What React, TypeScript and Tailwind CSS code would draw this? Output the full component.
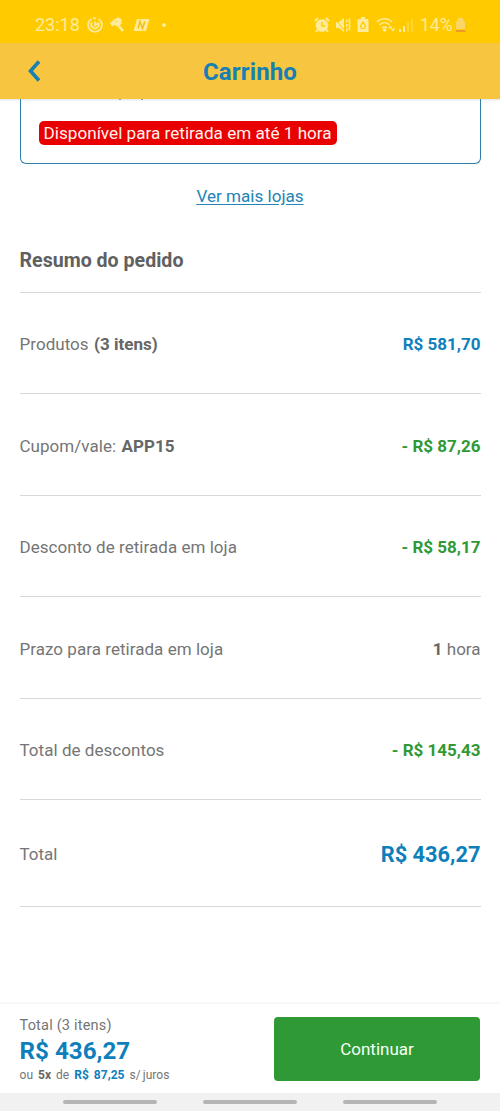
import React from "react";

type SummaryRow = {
  label: string;
  strong?: string;
  value: React.ReactNode;
  color: string;
};

const rows: SummaryRow[] = [
  {
    label: "Produtos",
    strong: "(3 itens)",
    value: "R$ 581,70",
    color: "text-[#0f7fbc] font-bold",
  },
  {
    label: "Cupom/vale:",
    strong: "APP15",
    value: "- R$ 87,26",
    color: "text-[#2f9a35] font-bold",
  },
  {
    label: "Desconto de retirada em loja",
    value: "- R$ 58,17",
    color: "text-[#2f9a35] font-bold",
  },
  {
    label: "Prazo para retirada em loja",
    value: (
      <>
        <b className="text-[#666]">1</b> hora
      </>
    ),
    color: "text-[#757575]",
  },
  {
    label: "Total de descontos",
    value: "- R$ 145,43",
    color: "text-[#2f9a35] font-bold",
  },
];

const StatusBar = () => (
  <div className="flex h-[43px] shrink-0 items-center bg-[#ffcb00] pt-[7px] pl-[35px] text-[#ffeb9a]">
    <span className="w-[46px] text-[18px] leading-5">23:18</span>
    <svg className="ml-[6px]" width="16" height="16" viewBox="0 0 16 16" fill="none" stroke="currentColor" strokeWidth="1.7">
      <path d="M4.5 2A6.9 6.9 0 1 0 11.5 2M6 1.4a6 6 0 0 1 3 0" />
      <path d="M5 5.5a3.7 3.7 0 1 0 6 0M8 4.5v4l2.5-2" />
    </svg>
    <svg className="ml-[6px]" width="16" height="16" viewBox="0 0 16 16" fill="currentColor">
      <path d="M1 6 5 2.5 9 .5l3.500 1.500V7L9 9.500 5.500 8 3 9.500z" />
      <path d="m9 8 5 6" stroke="currentColor" strokeWidth="2.4" />
      <circle cx="7" cy="4.5" r=".8" fill="#ffcb00" />
    </svg>
    <svg className="ml-[8px]" width="17" height="14" viewBox="0 0 17 14">
      <path d="M4 1h12.5L13 13H.5z" fill="currentColor" />
      <path d="m5 10.5 2-7 2.5 7 2.3-7" fill="none" stroke="#f3bd16" strokeWidth="1.5" />
    </svg>
    <span className="ml-[12px] size-1 rounded-full bg-current" />
    <svg className="ml-[148px]" width="16" height="16" viewBox="0 0 16 16" fill="currentColor">
      <circle cx="8" cy="8.5" r="6.3" />
      <path d="m1 4 3-3m11 3-3-3M3.5 13 2 15m10.5-2 1.5 2" stroke="currentColor" strokeWidth="2" />
      <path d="M8 5v4h3" fill="none" stroke="#ffcb00" strokeWidth="1.4" />
    </svg>
    <svg className="ml-[5px]" width="16" height="16" viewBox="0 0 16 16" fill="currentColor">
      <path d="M1 5h3l5-4v14l-5-4H1z" />
      <path d="m0 2 10 12" stroke="#ffcb00" strokeWidth="1" />
      <path d="M11.8 2.5v3m0 1.5v3m0 1.5v3M15 1.5l-1 2 1 2-1 2 1 2-1 2 1 2" fill="none" stroke="currentColor" strokeWidth="1.4" />
    </svg>
    <svg className="ml-[6px]" width="12" height="16" viewBox="0 0 12 16" fill="currentColor">
      <path d="M4 0h4v2h2.5l1 1v12H.5V3l1-1H4z" />
      <path d="m6 5 2.5 4-1 2.500h-3L3.500 9z" fill="none" stroke="#ffcb00" strokeWidth="1.2" />
    </svg>
    <svg className="ml-[7px]" width="19" height="16" viewBox="0 0 19 16" fill="none" stroke="currentColor" strokeWidth="1.5">
      <path d="M1 5c4-4.5 11-4.5 15 0M3.5 8c3-3 7-3 10 0M6 11c1.5-1.5 3.5-1.5 5 0" />
      <circle cx="8.5" cy="13" r="1" fill="currentColor" />
      <path d="m13 11.500 1.500-2 1.500 2m-.5 0 1.500 2 1.500-2" strokeWidth="1.3" />
    </svg>
    <svg className="ml-[4px]" width="14" height="15" viewBox="0 0 14 15" fill="currentColor">
      <path d="M0 11h2v3H0zM4 8h2v6H4z" />
      <path d="M8 4h2v10H8zM12 1h2v13h-2z" opacity=".35" />
    </svg>
    <span className="ml-[7px] w-[33px] text-[17.5px] leading-5 whitespace-nowrap">14%</span>
    <svg className="ml-[2px]" width="11" height="15" viewBox="0 0 11 15">
      <path d="M3 0h5v2l2 2v7H1V4l2-2z" fill="#fbd667" />
      <path d="M1 12h9.5v2H1z" fill="#ed9a2d" />
    </svg>
  </div>
);

const Header = () => (
  <header className="relative flex h-14 shrink-0 items-center justify-center bg-[#f7c540] pt-[2px] shadow-[0_1px_2px_rgba(0,0,0,0.12)]">
    <button className="absolute top-[17px] left-[28px]" aria-label="Voltar">
      <svg width="13" height="22" viewBox="0 0 13 22" fill="none" stroke="#1680b3" strokeWidth="3.6">
        <path d="M11 1.5 2.5 11l8.5 9.5" />
      </svg>
    </button>
    <h1 className="text-[24px] font-bold tracking-[0.15px] text-[#1680b3]">Carrinho</h1>
  </header>
);

const Row = ({ label, strong, value, color }: SummaryRow) => (
  <div className="flex h-[101.4px] items-center justify-between border-b-[1.5px] border-[#d8d8d8] pt-[4px] text-[17px] text-[#757575]">
    <span className="tracking-[0.04px]">
      {label} {strong && <b className="ml-px text-[#666]">{strong}</b>}
    </span>
    <span className={color}>{value}</span>
  </div>
);

const Footer = () => (
  <footer className="flex h-[89px] shrink-0 justify-between pt-[13px] pr-5 pl-[19.5px] shadow-[0_-1px_3px_rgba(0,0,0,0.06)]">
    <div className="text-[#757575]">
      <p className="pt-px text-[14.5px] leading-[16px] tracking-[0.2px]">Total (3 itens)</p>
      <p className="mt-[3px] text-[24.2px] leading-[28px] font-bold text-[#0f7fbc]">R$ 436,27</p>
      <p className="mt-[2px] text-[12px] leading-[16px] tracking-[0.05px] whitespace-nowrap [word-spacing:1.9px]">
        ou <b className="text-[#666]">5x</b> de <b className="text-[#0f7fbc]">R$ 87,25</b> s/
        <span className="ml-[2px]">juros</span>
      </p>
    </div>
    <button className="h-16 w-[206px] rounded-[4px] bg-[#2f9a35] pt-px text-[17px] text-[#f4fff4]">
      Continuar
    </button>
  </footer>
);

const App = () => {
  return (
    <div className="flex h-[1111px] w-[500px] flex-col overflow-hidden bg-white font-[Roboto,sans-serif]">
      <StatusBar />
      <Header />
      <main className="min-h-0 flex-1 px-[19.5px]">
        <div className="relative h-[65px] rounded-b-[6px] border-[1.5px] border-t-0 border-[#2f7fa8] pt-[22px] pl-[18px]">
          <span className="absolute top-0 left-[98px] h-px w-[2px] bg-[#999]" />
          <span className="absolute top-0 left-[120px] h-px w-[2px] bg-[#999]" />
          <span className="block h-6 w-[298px] rounded-[5px] bg-[#e90000] pl-[5px] text-[17.15px] leading-[25px] whitespace-nowrap text-[#fff2ee]">
            Disponível para retirada em até 1 hora
          </span>
        </div>
        <div className="mt-[20px] text-center text-[17.1px] leading-6">
          <a className="text-[#2384b5] underline underline-offset-2">Ver mais lojas</a>
        </div>
        <h2 className="mt-[37px] h-[48px] border-b-[1.5px] border-[#d8d8d8] text-[19.6px] leading-[32px] font-bold text-[#606060]">
          Resumo do pedido
        </h2>
        {rows.map((row) => (
          <Row key={row.label} {...row} />
        ))}
        <div className="flex h-[107px] items-center justify-between border-b-[1.5px] border-[#d8d8d8] pt-[4px] text-[17px] text-[#757575]">
          <span>Total</span>
          <span className="text-[21.8px] font-bold text-[#0f7fbc]">R$ 436,27</span>
        </div>
      </main>
      <Footer />
      <nav className="flex h-[18px] shrink-0 items-center justify-center gap-[46px] bg-[#f1f1f1]">
        <span className="h-1 w-[94px] rounded-full bg-[#b5b5b5]" />
        <span className="h-1 w-[94px] rounded-full bg-[#b5b5b5]" />
        <span className="h-1 w-[94px] rounded-full bg-[#b5b5b5]" />
      </nav>
    </div>
  );
};

export default App;
